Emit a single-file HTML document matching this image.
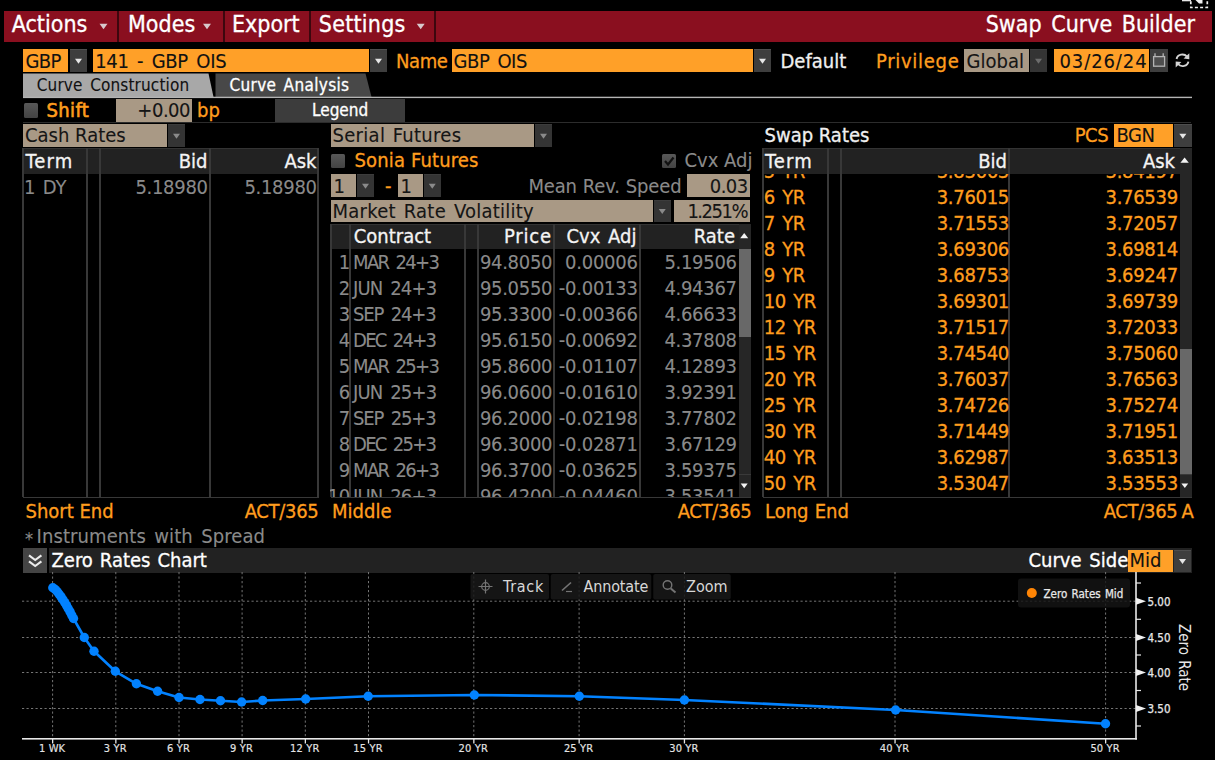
<!DOCTYPE html>
<html lang="en"><head><meta charset="utf-8"><title>Swap Curve Builder</title>
<style>
html,body{margin:0;padding:0;background:#000;}
body{width:1215px;height:760px;position:relative;overflow:hidden;font-family:"DejaVu Sans Condensed","DejaVu Sans","Liberation Sans",sans-serif;font-stretch:condensed;}
body div,body svg{position:absolute;}
.t{white-space:nowrap;-webkit-text-stroke:0.3px;}
.g{-webkit-text-stroke:0.1px;}
</style></head><body>
<div style="left:3.5px;top:10.5px;width:1208px;height:31px;background:#8a0f1f;"></div>
<div style="left:116.9px;top:10.5px;width:2px;height:31px;background:#3c070e;"></div>
<div style="left:222.6px;top:10.5px;width:2px;height:31px;background:#3c070e;"></div>
<div style="left:308.8px;top:10.5px;width:2px;height:31px;background:#3c070e;"></div>
<div style="left:434.2px;top:10.5px;width:2px;height:31px;background:#3c070e;"></div>
<div class="t " style="top:13.34px;font-size:23px;line-height:23px;color:#fff;left:11.75px;">Actions</div>
<svg style="left:0;top:0" width="1215" height="760"><polygon points="99.5,23.75 107.5,23.75 103.5,29.25" fill="#d8c8cc"/></svg>
<div class="t " style="top:13.34px;font-size:23px;line-height:23px;color:#fff;left:128px;">Modes</div>
<svg style="left:0;top:0" width="1215" height="760"><polygon points="203.0,23.75 211.0,23.75 207,29.25" fill="#d8c8cc"/></svg>
<div class="t " style="top:13.34px;font-size:23px;line-height:23px;color:#fff;left:232px;">Export</div>
<div class="t " style="top:13.34px;font-size:23px;line-height:23px;color:#fff;left:318.75px;letter-spacing:0.25px;">Settings</div>
<svg style="left:0;top:0" width="1215" height="760"><polygon points="416.7,23.75 424.7,23.75 420.7,29.25" fill="#d8c8cc"/></svg>
<div class="t " style="top:13.34px;font-size:23px;line-height:23px;color:#fff;right:20px;word-spacing:3px;">Swap Curve Builder</div>
<svg style="left:1180px;top:0" width="30" height="10"><rect x="2" y="0" width="9" height="1.300" fill="#e8e8e8"/><rect x="10.800" y="-3" width="16.500" height="10.500" fill="none" stroke="#f0f0f0" stroke-width="1.700" stroke-dasharray="3 2.200"/><polygon points="15.500,0 22.500,0 22.500,3.500 19,3.500" fill="#f0f0f0"/></svg>
<div style="left:23px;top:49px;width:45px;height:23px;background:#ffa028;"></div>
<div class="t  g" style="top:51.18px;font-size:20px;line-height:20px;color:#111;left:25.5px;letter-spacing:-0.7px;">GBP</div>
<div style="left:70px;top:49px;width:17px;height:23px;background:#3e3e3e;box-shadow:inset 0 1px 0 #4e4e4e;"></div>
<svg style="left:0;top:0" width="1215" height="760"><polygon points="75.0,58.7 82.0,58.7 78.5,63.7" fill="#e6e6e6"/></svg>
<div style="left:93px;top:49px;width:276px;height:23px;background:#ffa028;"></div>
<div class="t  g" style="top:51.18px;font-size:20px;line-height:20px;color:#111;left:95.2px;letter-spacing:-0.3px;word-spacing:3px;">141 - GBP OIS</div>
<div style="left:370px;top:49px;width:17px;height:23px;background:#3e3e3e;box-shadow:inset 0 1px 0 #4e4e4e;"></div>
<svg style="left:0;top:0" width="1215" height="760"><polygon points="375.0,58.7 382.0,58.7 378.5,63.7" fill="#e6e6e6"/></svg>
<div class="t " style="top:51.18px;font-size:20px;line-height:20px;color:#ff9d1e;left:396px;letter-spacing:-0.4px;">Name</div>
<div style="left:452px;top:49px;width:301px;height:23px;background:#ffa028;"></div>
<div class="t  g" style="top:51.18px;font-size:20px;line-height:20px;color:#111;left:453.6px;letter-spacing:-0.5px;word-spacing:3px;">GBP OIS</div>
<div style="left:754px;top:49px;width:17px;height:23px;background:#3e3e3e;box-shadow:inset 0 1px 0 #4e4e4e;"></div>
<svg style="left:0;top:0" width="1215" height="760"><polygon points="759.0,58.7 766.0,58.7 762.5,63.7" fill="#e6e6e6"/></svg>
<div class="t " style="top:51.18px;font-size:20px;line-height:20px;color:#f0f0f0;left:780.5px;">Default</div>
<div class="t " style="top:51.18px;font-size:20px;line-height:20px;color:#ff9d1e;left:876px;letter-spacing:0.7px;">Privilege</div>
<div style="left:963.5px;top:49px;width:65px;height:23px;background:#a99985;"></div>
<div class="t  g" style="top:51.18px;font-size:20px;line-height:20px;color:#151515;left:966.5px;">Global</div>
<div style="left:1030px;top:49px;width:17px;height:23px;background:#343434;box-shadow:inset 0 1px 0 #3c3c3c;"></div>
<svg style="left:0;top:0" width="1215" height="760"><polygon points="1035.0,58.7 1042.0,58.7 1038.5,63.7" fill="#6c6c6c"/></svg>
<div style="left:1053.5px;top:49px;width:95px;height:23px;background:#ffa028;"></div>
<div class="t  g" style="top:51.18px;font-size:20px;line-height:20px;color:#111;left:1059.5px;letter-spacing:0.9px;">03/26/24</div>
<div style="left:1150px;top:49px;width:18px;height:23px;background:#3e3e3e;"></div>
<svg style="left:1150px;top:49px" width="18" height="23"><rect x="3.600" y="7.600" width="11" height="9.600" fill="#4e4e4e" stroke="#b4b4b4" stroke-width="1.300"/><path d="M5 4.200V7.500 M13.200 4.200V7.500" stroke="#b4b4b4" stroke-width="1.300"/></svg>
<svg style="left:1173.500px;top:51.500px" width="17" height="17" viewBox="0 0 17 17"><path d="M2.600 7A5.800 5.200 0 0 1 13 4.600" fill="none" stroke="#d4d4d4" stroke-width="1.900"/><path d="M14.400 9.600A5.800 5.200 0 0 1 4 12" fill="none" stroke="#d4d4d4" stroke-width="1.900"/><polygon points="15.300,1.200 15.300,7.200 9.600,6.600" fill="#d4d4d4"/><polygon points="1.700,15.400 1.700,9.400 7.400,10" fill="#d4d4d4"/></svg>
<svg style="left:0;top:0" width="1215" height="760"><polygon points="23,73.500 208.500,73.500 213.500,97 23,97" fill="#a8a8a8"/><polygon points="215.500,73.500 365.500,73.500 371.500,97 215.500,97" fill="#484848"/><rect x="23" y="96.700" width="1169" height="1.400" fill="#b4b4b4"/></svg>
<div class="t  g" style="top:76.92px;font-size:17px;line-height:17px;color:#111;left:36.75px;letter-spacing:0.15px;word-spacing:2.5px;">Curve Construction</div>
<div class="t " style="top:76.92px;font-size:17px;line-height:17px;color:#fff;left:229.5px;letter-spacing:0.35px;word-spacing:2px;">Curve Analysis</div>
<div style="left:23.5px;top:103px;width:14px;height:14.5px;background:#4a4a4a;border-radius:1.5px;background:linear-gradient(#585858,#434343);"></div>
<div class="t " style="top:100.28px;font-size:20px;line-height:20px;color:#ff9d1e;left:46.5px;letter-spacing:0.35px;-webkit-text-stroke:0.6px;">Shift</div>
<div style="left:115.5px;top:98.8px;width:76.5px;height:23px;background:#a99985;"></div>
<div class="t  g" style="top:100.28px;font-size:20px;line-height:20px;color:#151515;right:1025px;letter-spacing:-0.5px;">+0.00</div>
<div class="t " style="top:100.28px;font-size:20px;line-height:20px;color:#ff9d1e;left:197px;">bp</div>
<div style="left:275px;top:99px;width:130px;height:22.8px;background:#3c3c3c;"></div>
<div class="t " style="top:102.12px;font-size:17px;line-height:17px;color:#fff;left:312px;">Legend</div>
<div style="left:23px;top:122px;width:1168px;height:1px;background:#2c2c2c;"></div>
<div style="left:23px;top:124px;width:144px;height:23px;background:#a99985;"></div>
<div class="t  g" style="top:125.08px;font-size:20px;line-height:20px;color:#151515;left:25px;">Cash Rates</div>
<div style="left:168px;top:124px;width:17px;height:23px;background:#343434;box-shadow:inset 0 1px 0 #3c3c3c;"></div>
<svg style="left:0;top:0" width="1215" height="760"><polygon points="173.0,133.7 180.0,133.7 176.5,138.7" fill="#8a8a8a"/></svg>
<div style="left:330.5px;top:124px;width:203.5px;height:23px;background:#a99985;"></div>
<div class="t  g" style="top:125.08px;font-size:20px;line-height:20px;color:#151515;left:332.5px;letter-spacing:0.3px;word-spacing:1.5px;">Serial Futures</div>
<div style="left:535px;top:124px;width:17px;height:23px;background:#343434;box-shadow:inset 0 1px 0 #3c3c3c;"></div>
<svg style="left:0;top:0" width="1215" height="760"><polygon points="540.0,133.7 547.0,133.7 543.5,138.7" fill="#8a8a8a"/></svg>
<div class="t " style="top:125.08px;font-size:20px;line-height:20px;color:#f0f0f0;left:764.5px;">Swap Rates</div>
<div class="t " style="top:125.08px;font-size:20px;line-height:20px;color:#ff9d1e;left:1074.75px;letter-spacing:-0.5px;">PCS</div>
<div style="left:1113.5px;top:124px;width:59.5px;height:23px;background:#ffa028;"></div>
<div class="t  g" style="top:125.08px;font-size:20px;line-height:20px;color:#111;left:1116.5px;letter-spacing:-0.5px;">BGN</div>
<div style="left:1174px;top:124px;width:17.7px;height:23px;background:#3e3e3e;box-shadow:inset 0 1px 0 #4e4e4e;"></div>
<svg style="left:0;top:0" width="1215" height="760"><polygon points="1179.35,133.7 1186.35,133.7 1182.85,138.7" fill="#e6e6e6"/></svg>
<div style="left:23px;top:148px;width:295.5px;height:26.2px;background:#222222;"></div>
<div style="left:23px;top:148px;width:295.5px;height:1px;background:#333;"></div>
<div style="left:22.1px;top:148px;width:2px;height:349px;background:#383838;"></div>
<div style="left:85.9px;top:148px;width:2px;height:349px;background:#383838;"></div>
<div style="left:99.25px;top:148px;width:2px;height:349px;background:#383838;"></div>
<div style="left:208.5px;top:148px;width:2px;height:349px;background:#383838;"></div>
<div style="left:317px;top:148px;width:2px;height:349px;background:#383838;"></div>
<div style="left:23px;top:496.5px;width:296px;height:1px;background:#383838;"></div>
<div class="t " style="top:150.68px;font-size:20px;line-height:20px;color:#f4f4f4;left:25.5px;letter-spacing:1.2px;">Term</div>
<div class="t " style="top:150.68px;font-size:20px;line-height:20px;color:#f4f4f4;right:1007.5px;">Bid</div>
<div class="t " style="top:150.68px;font-size:20px;line-height:20px;color:#f4f4f4;right:898.5px;">Ask</div>
<div class="t  g" style="top:176.88px;font-size:20px;line-height:20px;color:#8a8a8a;left:24px;word-spacing:1.5px;">1 DY</div>
<div class="t  g" style="top:176.88px;font-size:20px;line-height:20px;color:#8a8a8a;right:1007.3px;letter-spacing:-0.3px;">5.18980</div>
<div class="t  g" style="top:176.88px;font-size:20px;line-height:20px;color:#8a8a8a;right:898.3px;letter-spacing:-0.3px;">5.18980</div>
<div style="left:331px;top:153.5px;width:14px;height:14.5px;background:#4a4a4a;border-radius:1.5px;background:linear-gradient(#585858,#434343);"></div>
<div class="t " style="top:150.08px;font-size:20px;line-height:20px;color:#ff9d1e;left:354.5px;letter-spacing:0.15px;word-spacing:0px;">Sonia Futures</div>
<div style="left:662px;top:153.5px;width:14px;height:14.5px;background:#4a4a4a;border-radius:1.5px;background:linear-gradient(#585858,#434343);"></div>
<svg style="left:662px;top:154px" width="14" height="14"><path d="M3 7L6 10.500L11.500 3.500" fill="none" stroke="#111" stroke-width="2.2"/></svg>
<div class="t  g" style="top:150.08px;font-size:20px;line-height:20px;color:#8a8a8a;left:684.5px;word-spacing:0px;">Cvx Adj</div>
<div style="left:330.5px;top:174px;width:25px;height:23px;background:#a99985;"></div>
<div class="t  g" style="top:176.28px;font-size:20px;line-height:20px;color:#151515;left:333.5px;">1</div>
<div style="left:357px;top:174px;width:17px;height:23px;background:#343434;box-shadow:inset 0 1px 0 #3c3c3c;"></div>
<svg style="left:0;top:0" width="1215" height="760"><polygon points="362.0,183.7 369.0,183.7 365.5,188.7" fill="#8a8a8a"/></svg>
<div class="t " style="top:176.28px;font-size:20px;line-height:20px;color:#ff9d1e;left:385px;">-</div>
<div style="left:397.5px;top:174px;width:25px;height:23px;background:#a99985;"></div>
<div class="t  g" style="top:176.28px;font-size:20px;line-height:20px;color:#151515;left:400.5px;">1</div>
<div style="left:424px;top:174px;width:16.5px;height:23px;background:#343434;box-shadow:inset 0 1px 0 #3c3c3c;"></div>
<svg style="left:0;top:0" width="1215" height="760"><polygon points="428.75,183.7 435.75,183.7 432.25,188.7" fill="#8a8a8a"/></svg>
<div class="t  g" style="top:176.28px;font-size:20px;line-height:20px;color:#8a8a8a;right:533.5px;letter-spacing:-0.15px;word-spacing:0.5px;">Mean Rev. Speed</div>
<div style="left:687px;top:174px;width:63.25px;height:23px;background:#a99985;"></div>
<div class="t  g" style="top:176.28px;font-size:20px;line-height:20px;color:#151515;right:467.5px;letter-spacing:-0.6px;">0.03</div>
<div style="left:330.5px;top:199.5px;width:322px;height:22.5px;background:#a99985;"></div>
<div class="t  g" style="top:200.78px;font-size:20px;line-height:20px;color:#151515;left:332.5px;letter-spacing:0.25px;word-spacing:2px;">Market Rate Volatility</div>
<div style="left:653.5px;top:199.5px;width:17.5px;height:22.5px;background:#343434;box-shadow:inset 0 1px 0 #3c3c3c;"></div>
<svg style="left:0;top:0" width="1215" height="760"><polygon points="658.75,208.95 665.75,208.95 662.25,213.95" fill="#8a8a8a"/></svg>
<div style="left:673.75px;top:199.5px;width:76.5px;height:22.5px;background:#a99985;"></div>
<div class="t  g" style="top:200.78px;font-size:20px;line-height:20px;color:#151515;right:468px;letter-spacing:-1.5px;">1.251%</div>
<div style="left:330.5px;top:223.7px;width:420px;height:25.8px;background:#222222;"></div>
<div style="left:330.5px;top:223.7px;width:420px;height:1px;background:#333;"></div>
<div style="left:329.5px;top:223.7px;width:2px;height:273.3px;background:#383838;"></div>
<div style="left:349.1px;top:223.7px;width:2px;height:273.3px;background:#383838;"></div>
<div style="left:463.5px;top:223.7px;width:2px;height:273.3px;background:#383838;"></div>
<div style="left:476.5px;top:223.7px;width:2px;height:273.3px;background:#383838;"></div>
<div style="left:553.1px;top:223.7px;width:2px;height:273.3px;background:#383838;"></div>
<div style="left:638.5px;top:223.7px;width:2px;height:273.3px;background:#383838;"></div>
<div style="left:330.5px;top:496.5px;width:420px;height:1px;background:#383838;"></div>
<div class="t " style="top:226.28px;font-size:20px;line-height:20px;color:#f4f4f4;left:353.75px;">Contract</div>
<div class="t " style="top:226.28px;font-size:20px;line-height:20px;color:#f4f4f4;right:663.2px;letter-spacing:0.8px;">Price</div>
<div class="t " style="top:226.28px;font-size:20px;line-height:20px;color:#f4f4f4;right:578.5px;word-spacing:2px;">Cvx Adj</div>
<div class="t " style="top:226.28px;font-size:20px;line-height:20px;color:#f4f4f4;right:480px;">Rate</div>
<div style="left:330px;top:250px;width:409px;height:246.5px;overflow:hidden">
<div class="t g" style="top:1.88px;font-size:20px;line-height:20px;color:#8a8a8a;right:389.5px;letter-spacing:-0.6px;">1</div>
<div class="t g" style="top:1.88px;font-size:20px;line-height:20px;color:#8a8a8a;left:23px;word-spacing:3px;letter-spacing:-1.65px;">MAR 24+3</div>
<div class="t g" style="top:1.88px;font-size:20px;line-height:20px;color:#8a8a8a;right:186.79999999999995px;letter-spacing:-0.3px;">94.8050</div>
<div class="t g" style="top:1.88px;font-size:20px;line-height:20px;color:#8a8a8a;right:101.29999999999995px;letter-spacing:-0.25px;">0.00006</div>
<div class="t g" style="top:1.88px;font-size:20px;line-height:20px;color:#8a8a8a;right:2.2999999999999545px;letter-spacing:-0.3px;">5.19506</div>
<div class="t g" style="top:27.88px;font-size:20px;line-height:20px;color:#8a8a8a;right:389.5px;letter-spacing:-0.6px;">2</div>
<div class="t g" style="top:27.88px;font-size:20px;line-height:20px;color:#8a8a8a;left:23px;word-spacing:3px;letter-spacing:-0.85px;">JUN 24+3</div>
<div class="t g" style="top:27.88px;font-size:20px;line-height:20px;color:#8a8a8a;right:186.79999999999995px;letter-spacing:-0.3px;">95.0550</div>
<div class="t g" style="top:27.88px;font-size:20px;line-height:20px;color:#8a8a8a;right:101.29999999999995px;letter-spacing:-0.25px;">-0.00133</div>
<div class="t g" style="top:27.88px;font-size:20px;line-height:20px;color:#8a8a8a;right:2.2999999999999545px;letter-spacing:-0.3px;">4.94367</div>
<div class="t g" style="top:53.88px;font-size:20px;line-height:20px;color:#8a8a8a;right:389.5px;letter-spacing:-0.6px;">3</div>
<div class="t g" style="top:53.88px;font-size:20px;line-height:20px;color:#8a8a8a;left:23px;word-spacing:3px;letter-spacing:-1.15px;">SEP 24+3</div>
<div class="t g" style="top:53.88px;font-size:20px;line-height:20px;color:#8a8a8a;right:186.79999999999995px;letter-spacing:-0.3px;">95.3300</div>
<div class="t g" style="top:53.88px;font-size:20px;line-height:20px;color:#8a8a8a;right:101.29999999999995px;letter-spacing:-0.25px;">-0.00366</div>
<div class="t g" style="top:53.88px;font-size:20px;line-height:20px;color:#8a8a8a;right:2.2999999999999545px;letter-spacing:-0.3px;">4.66633</div>
<div class="t g" style="top:79.88px;font-size:20px;line-height:20px;color:#8a8a8a;right:389.5px;letter-spacing:-0.6px;">4</div>
<div class="t g" style="top:79.88px;font-size:20px;line-height:20px;color:#8a8a8a;left:23px;word-spacing:3px;letter-spacing:-1.7px;">DEC 24+3</div>
<div class="t g" style="top:79.88px;font-size:20px;line-height:20px;color:#8a8a8a;right:186.79999999999995px;letter-spacing:-0.3px;">95.6150</div>
<div class="t g" style="top:79.88px;font-size:20px;line-height:20px;color:#8a8a8a;right:101.29999999999995px;letter-spacing:-0.25px;">-0.00692</div>
<div class="t g" style="top:79.88px;font-size:20px;line-height:20px;color:#8a8a8a;right:2.2999999999999545px;letter-spacing:-0.3px;">4.37808</div>
<div class="t g" style="top:105.88px;font-size:20px;line-height:20px;color:#8a8a8a;right:389.5px;letter-spacing:-0.6px;">5</div>
<div class="t g" style="top:105.88px;font-size:20px;line-height:20px;color:#8a8a8a;left:23px;word-spacing:3px;letter-spacing:-1.65px;">MAR 25+3</div>
<div class="t g" style="top:105.88px;font-size:20px;line-height:20px;color:#8a8a8a;right:186.79999999999995px;letter-spacing:-0.3px;">95.8600</div>
<div class="t g" style="top:105.88px;font-size:20px;line-height:20px;color:#8a8a8a;right:101.29999999999995px;letter-spacing:-0.25px;">-0.01107</div>
<div class="t g" style="top:105.88px;font-size:20px;line-height:20px;color:#8a8a8a;right:2.2999999999999545px;letter-spacing:-0.3px;">4.12893</div>
<div class="t g" style="top:131.88px;font-size:20px;line-height:20px;color:#8a8a8a;right:389.5px;letter-spacing:-0.6px;">6</div>
<div class="t g" style="top:131.88px;font-size:20px;line-height:20px;color:#8a8a8a;left:23px;word-spacing:3px;letter-spacing:-0.85px;">JUN 25+3</div>
<div class="t g" style="top:131.88px;font-size:20px;line-height:20px;color:#8a8a8a;right:186.79999999999995px;letter-spacing:-0.3px;">96.0600</div>
<div class="t g" style="top:131.88px;font-size:20px;line-height:20px;color:#8a8a8a;right:101.29999999999995px;letter-spacing:-0.25px;">-0.01610</div>
<div class="t g" style="top:131.88px;font-size:20px;line-height:20px;color:#8a8a8a;right:2.2999999999999545px;letter-spacing:-0.3px;">3.92391</div>
<div class="t g" style="top:157.88px;font-size:20px;line-height:20px;color:#8a8a8a;right:389.5px;letter-spacing:-0.6px;">7</div>
<div class="t g" style="top:157.88px;font-size:20px;line-height:20px;color:#8a8a8a;left:23px;word-spacing:3px;letter-spacing:-1.15px;">SEP 25+3</div>
<div class="t g" style="top:157.88px;font-size:20px;line-height:20px;color:#8a8a8a;right:186.79999999999995px;letter-spacing:-0.3px;">96.2000</div>
<div class="t g" style="top:157.88px;font-size:20px;line-height:20px;color:#8a8a8a;right:101.29999999999995px;letter-spacing:-0.25px;">-0.02198</div>
<div class="t g" style="top:157.88px;font-size:20px;line-height:20px;color:#8a8a8a;right:2.2999999999999545px;letter-spacing:-0.3px;">3.77802</div>
<div class="t g" style="top:183.88px;font-size:20px;line-height:20px;color:#8a8a8a;right:389.5px;letter-spacing:-0.6px;">8</div>
<div class="t g" style="top:183.88px;font-size:20px;line-height:20px;color:#8a8a8a;left:23px;word-spacing:3px;letter-spacing:-1.7px;">DEC 25+3</div>
<div class="t g" style="top:183.88px;font-size:20px;line-height:20px;color:#8a8a8a;right:186.79999999999995px;letter-spacing:-0.3px;">96.3000</div>
<div class="t g" style="top:183.88px;font-size:20px;line-height:20px;color:#8a8a8a;right:101.29999999999995px;letter-spacing:-0.25px;">-0.02871</div>
<div class="t g" style="top:183.88px;font-size:20px;line-height:20px;color:#8a8a8a;right:2.2999999999999545px;letter-spacing:-0.3px;">3.67129</div>
<div class="t g" style="top:209.88px;font-size:20px;line-height:20px;color:#8a8a8a;right:389.5px;letter-spacing:-0.6px;">9</div>
<div class="t g" style="top:209.88px;font-size:20px;line-height:20px;color:#8a8a8a;left:23px;word-spacing:3px;letter-spacing:-1.65px;">MAR 26+3</div>
<div class="t g" style="top:209.88px;font-size:20px;line-height:20px;color:#8a8a8a;right:186.79999999999995px;letter-spacing:-0.3px;">96.3700</div>
<div class="t g" style="top:209.88px;font-size:20px;line-height:20px;color:#8a8a8a;right:101.29999999999995px;letter-spacing:-0.25px;">-0.03625</div>
<div class="t g" style="top:209.88px;font-size:20px;line-height:20px;color:#8a8a8a;right:2.2999999999999545px;letter-spacing:-0.3px;">3.59375</div>
<div class="t g" style="top:235.88px;font-size:20px;line-height:20px;color:#8a8a8a;right:389.5px;letter-spacing:-0.6px;">10</div>
<div class="t g" style="top:235.88px;font-size:20px;line-height:20px;color:#8a8a8a;left:23px;word-spacing:3px;letter-spacing:-0.85px;">JUN 26+3</div>
<div class="t g" style="top:235.88px;font-size:20px;line-height:20px;color:#8a8a8a;right:186.79999999999995px;letter-spacing:-0.3px;">96.4200</div>
<div class="t g" style="top:235.88px;font-size:20px;line-height:20px;color:#8a8a8a;right:101.29999999999995px;letter-spacing:-0.25px;">-0.04460</div>
<div class="t g" style="top:235.88px;font-size:20px;line-height:20px;color:#8a8a8a;right:2.2999999999999545px;letter-spacing:-0.3px;">3.53541</div>
</div>
<div style="left:738.8px;top:223.7px;width:12.4px;height:273.3px;background:#262626;"></div>
<div style="left:738.8px;top:248.5px;width:12.4px;height:88.5px;background:#686868;"></div>
<div style="left:738.8px;top:474px;width:12.4px;height:1px;background:#3a3a3a;"></div>
<svg style="left:0;top:0" width="1215" height="760"><polygon points="740.2,238.25 748.2,238.25 744.2,232.95" fill="#f4f4f4"/></svg>
<svg style="left:0;top:0" width="1215" height="760"><polygon points="740.7,483.40000000000003 747.7,483.40000000000003 744.2,488.20000000000005" fill="#f4f4f4"/></svg>
<div style="left:763px;top:148px;width:428.5px;height:26.2px;background:#222222;"></div>
<div style="left:763px;top:148px;width:428.5px;height:1px;background:#333;"></div>
<div style="left:761.9px;top:148px;width:2px;height:349px;background:#383838;"></div>
<div style="left:826.5px;top:148px;width:2px;height:349px;background:#383838;"></div>
<div style="left:839.7px;top:148px;width:2px;height:349px;background:#383838;"></div>
<div style="left:1008px;top:148px;width:2px;height:349px;background:#383838;"></div>
<div style="left:763px;top:496.5px;width:429px;height:1px;background:#383838;"></div>
<div class="t " style="top:150.68px;font-size:20px;line-height:20px;color:#f4f4f4;left:765px;letter-spacing:1.2px;">Term</div>
<div class="t " style="top:150.68px;font-size:20px;line-height:20px;color:#f4f4f4;right:208px;">Bid</div>
<div class="t " style="top:150.68px;font-size:20px;line-height:20px;color:#f4f4f4;right:40px;">Ask</div>
<div style="left:763px;top:174.300px;width:417px;height:322.2px;overflow:hidden">
<div class="t" style="top:-13.42px;font-size:20px;line-height:20px;color:#ff9d1e;left:0.800px;word-spacing:2px;letter-spacing:-0.4px">5 YR</div>
<div class="t" style="top:-13.42px;font-size:20px;line-height:20px;color:#ff9d1e;right:171px;letter-spacing:-0.3px">3.83663</div>
<div class="t" style="top:-13.42px;font-size:20px;line-height:20px;color:#ff9d1e;right:2.2000000000000455px;letter-spacing:-0.3px">3.84197</div>
<div class="t" style="top:12.58px;font-size:20px;line-height:20px;color:#ff9d1e;left:0.800px;word-spacing:2px;letter-spacing:-0.4px">6 YR</div>
<div class="t" style="top:12.58px;font-size:20px;line-height:20px;color:#ff9d1e;right:171px;letter-spacing:-0.3px">3.76015</div>
<div class="t" style="top:12.58px;font-size:20px;line-height:20px;color:#ff9d1e;right:2.2000000000000455px;letter-spacing:-0.3px">3.76539</div>
<div class="t" style="top:38.58px;font-size:20px;line-height:20px;color:#ff9d1e;left:0.800px;word-spacing:2px;letter-spacing:-0.4px">7 YR</div>
<div class="t" style="top:38.58px;font-size:20px;line-height:20px;color:#ff9d1e;right:171px;letter-spacing:-0.3px">3.71553</div>
<div class="t" style="top:38.58px;font-size:20px;line-height:20px;color:#ff9d1e;right:2.2000000000000455px;letter-spacing:-0.3px">3.72057</div>
<div class="t" style="top:64.58px;font-size:20px;line-height:20px;color:#ff9d1e;left:0.800px;word-spacing:2px;letter-spacing:-0.4px">8 YR</div>
<div class="t" style="top:64.58px;font-size:20px;line-height:20px;color:#ff9d1e;right:171px;letter-spacing:-0.3px">3.69306</div>
<div class="t" style="top:64.58px;font-size:20px;line-height:20px;color:#ff9d1e;right:2.2000000000000455px;letter-spacing:-0.3px">3.69814</div>
<div class="t" style="top:90.58px;font-size:20px;line-height:20px;color:#ff9d1e;left:0.800px;word-spacing:2px;letter-spacing:-0.4px">9 YR</div>
<div class="t" style="top:90.58px;font-size:20px;line-height:20px;color:#ff9d1e;right:171px;letter-spacing:-0.3px">3.68753</div>
<div class="t" style="top:90.58px;font-size:20px;line-height:20px;color:#ff9d1e;right:2.2000000000000455px;letter-spacing:-0.3px">3.69247</div>
<div class="t" style="top:116.58px;font-size:20px;line-height:20px;color:#ff9d1e;left:0.800px;word-spacing:2px;letter-spacing:-0.4px">10 YR</div>
<div class="t" style="top:116.58px;font-size:20px;line-height:20px;color:#ff9d1e;right:171px;letter-spacing:-0.3px">3.69301</div>
<div class="t" style="top:116.58px;font-size:20px;line-height:20px;color:#ff9d1e;right:2.2000000000000455px;letter-spacing:-0.3px">3.69739</div>
<div class="t" style="top:142.58px;font-size:20px;line-height:20px;color:#ff9d1e;left:0.800px;word-spacing:2px;letter-spacing:-0.4px">12 YR</div>
<div class="t" style="top:142.58px;font-size:20px;line-height:20px;color:#ff9d1e;right:171px;letter-spacing:-0.3px">3.71517</div>
<div class="t" style="top:142.58px;font-size:20px;line-height:20px;color:#ff9d1e;right:2.2000000000000455px;letter-spacing:-0.3px">3.72033</div>
<div class="t" style="top:168.58px;font-size:20px;line-height:20px;color:#ff9d1e;left:0.800px;word-spacing:2px;letter-spacing:-0.4px">15 YR</div>
<div class="t" style="top:168.58px;font-size:20px;line-height:20px;color:#ff9d1e;right:171px;letter-spacing:-0.3px">3.74540</div>
<div class="t" style="top:168.58px;font-size:20px;line-height:20px;color:#ff9d1e;right:2.2000000000000455px;letter-spacing:-0.3px">3.75060</div>
<div class="t" style="top:194.58px;font-size:20px;line-height:20px;color:#ff9d1e;left:0.800px;word-spacing:2px;letter-spacing:-0.4px">20 YR</div>
<div class="t" style="top:194.58px;font-size:20px;line-height:20px;color:#ff9d1e;right:171px;letter-spacing:-0.3px">3.76037</div>
<div class="t" style="top:194.58px;font-size:20px;line-height:20px;color:#ff9d1e;right:2.2000000000000455px;letter-spacing:-0.3px">3.76563</div>
<div class="t" style="top:220.58px;font-size:20px;line-height:20px;color:#ff9d1e;left:0.800px;word-spacing:2px;letter-spacing:-0.4px">25 YR</div>
<div class="t" style="top:220.58px;font-size:20px;line-height:20px;color:#ff9d1e;right:171px;letter-spacing:-0.3px">3.74726</div>
<div class="t" style="top:220.58px;font-size:20px;line-height:20px;color:#ff9d1e;right:2.2000000000000455px;letter-spacing:-0.3px">3.75274</div>
<div class="t" style="top:246.58px;font-size:20px;line-height:20px;color:#ff9d1e;left:0.800px;word-spacing:2px;letter-spacing:-0.4px">30 YR</div>
<div class="t" style="top:246.58px;font-size:20px;line-height:20px;color:#ff9d1e;right:171px;letter-spacing:-0.3px">3.71449</div>
<div class="t" style="top:246.58px;font-size:20px;line-height:20px;color:#ff9d1e;right:2.2000000000000455px;letter-spacing:-0.3px">3.71951</div>
<div class="t" style="top:272.58px;font-size:20px;line-height:20px;color:#ff9d1e;left:0.800px;word-spacing:2px;letter-spacing:-0.4px">40 YR</div>
<div class="t" style="top:272.58px;font-size:20px;line-height:20px;color:#ff9d1e;right:171px;letter-spacing:-0.3px">3.62987</div>
<div class="t" style="top:272.58px;font-size:20px;line-height:20px;color:#ff9d1e;right:2.2000000000000455px;letter-spacing:-0.3px">3.63513</div>
<div class="t" style="top:298.58px;font-size:20px;line-height:20px;color:#ff9d1e;left:0.800px;word-spacing:2px;letter-spacing:-0.4px">50 YR</div>
<div class="t" style="top:298.58px;font-size:20px;line-height:20px;color:#ff9d1e;right:171px;letter-spacing:-0.3px">3.53047</div>
<div class="t" style="top:298.58px;font-size:20px;line-height:20px;color:#ff9d1e;right:2.2000000000000455px;letter-spacing:-0.3px">3.53553</div>
</div>
<div style="left:1179.8px;top:148px;width:12.4px;height:349px;background:#262626;"></div>
<div style="left:1179.8px;top:348.5px;width:12.4px;height:125px;background:#686868;"></div>
<div style="left:1179.8px;top:474px;width:12.4px;height:1px;background:#3a3a3a;"></div>
<svg style="left:0;top:0" width="1215" height="760"><polygon points="1180.3999999999999,162.85 1188.8,162.85 1184.6,157.54999999999998" fill="#f4f4f4"/></svg>
<svg style="left:0;top:0" width="1215" height="760"><polygon points="1181.3999999999999,483.5 1188.1999999999998,483.5 1184.8,488.1" fill="#f4f4f4"/></svg>
<div class="t " style="top:500.58px;font-size:20px;line-height:20px;color:#ff9d1e;left:25.5px;word-spacing:0px;">Short End</div>
<div class="t " style="top:500.58px;font-size:20px;line-height:20px;color:#ff9d1e;right:896.5px;letter-spacing:-0.3px;">ACT/365</div>
<div class="t " style="top:500.58px;font-size:20px;line-height:20px;color:#ff9d1e;left:332px;">Middle</div>
<div class="t " style="top:500.58px;font-size:20px;line-height:20px;color:#ff9d1e;right:463.5px;letter-spacing:-0.3px;">ACT/365</div>
<div class="t " style="top:500.58px;font-size:20px;line-height:20px;color:#ff9d1e;left:765px;word-spacing:0.5px;">Long End</div>
<div class="t " style="top:500.58px;font-size:20px;line-height:20px;color:#ff9d1e;right:37.5px;letter-spacing:-0.3px;">ACT/365</div>
<div class="t " style="top:500.58px;font-size:20px;line-height:20px;color:#ff9d1e;left:1181.5px;letter-spacing:-0.5px;">A</div>
<div class="t  g" style="top:529.97px;font-size:18px;line-height:18px;color:#8a8a8a;left:25px;">*</div>
<div class="t  g" style="top:526.08px;font-size:20px;line-height:20px;color:#8a8a8a;left:36.5px;letter-spacing:0.1px;word-spacing:2.5px;">Instruments with Spread</div>
<div style="left:23px;top:548px;width:24px;height:24.5px;background:#444;"></div>
<svg style="left:23px;top:548px" width="24" height="24"><path d="M6 7.300L12.200 12L18.400 7.300 M6 13.300L12.200 18L18.400 13.300" fill="none" stroke="#ececec" stroke-width="2.100"/></svg>
<div style="left:48.5px;top:548px;width:1143px;height:24.5px;background:#222222;"></div>
<div class="t " style="top:550.08px;font-size:20px;line-height:20px;color:#fff;left:51.5px;word-spacing:1.3px;">Zero Rates Chart</div>
<div class="t " style="top:550.08px;font-size:20px;line-height:20px;color:#fff;left:1028.5px;word-spacing:2px;">Curve Side</div>
<div style="left:1127.5px;top:549.5px;width:45px;height:22.5px;background:#ffa028;"></div>
<div class="t  g" style="top:550.08px;font-size:20px;line-height:20px;color:#111;left:1129.5px;">Mid</div>
<div style="left:1174px;top:549.5px;width:17px;height:22.5px;background:#3e3e3e;box-shadow:inset 0 1px 0 #4e4e4e;"></div>
<svg style="left:0;top:0" width="1215" height="760"><polygon points="1179.0,558.95 1186.0,558.95 1182.5,563.95" fill="#e6e6e6"/></svg>
<svg style="left:0;top:0" width="1215" height="760" font-family='&quot;DejaVu Sans Condensed&quot;,&quot;DejaVu Sans&quot;,&quot;Liberation Sans&quot;,sans-serif'>
<line x1="52.6" y1="572" x2="52.6" y2="738" stroke="#747474" stroke-width="1" stroke-dasharray="2.2 2.300"/>
<line x1="115.8" y1="572" x2="115.8" y2="738" stroke="#747474" stroke-width="1" stroke-dasharray="2.2 2.300"/>
<line x1="179.0" y1="572" x2="179.0" y2="738" stroke="#747474" stroke-width="1" stroke-dasharray="2.2 2.300"/>
<line x1="242.1" y1="572" x2="242.1" y2="738" stroke="#747474" stroke-width="1" stroke-dasharray="2.2 2.300"/>
<line x1="305.3" y1="572" x2="305.3" y2="738" stroke="#747474" stroke-width="1" stroke-dasharray="2.2 2.300"/>
<line x1="368.5" y1="572" x2="368.5" y2="738" stroke="#747474" stroke-width="1" stroke-dasharray="2.2 2.300"/>
<line x1="473.8" y1="572" x2="473.8" y2="738" stroke="#747474" stroke-width="1" stroke-dasharray="2.2 2.300"/>
<line x1="579.1" y1="572" x2="579.1" y2="738" stroke="#747474" stroke-width="1" stroke-dasharray="2.2 2.300"/>
<line x1="684.4" y1="572" x2="684.4" y2="738" stroke="#747474" stroke-width="1" stroke-dasharray="2.2 2.300"/>
<line x1="895.0" y1="572" x2="895.0" y2="738" stroke="#747474" stroke-width="1" stroke-dasharray="2.2 2.300"/>
<line x1="1105.6" y1="572" x2="1105.6" y2="738" stroke="#747474" stroke-width="1" stroke-dasharray="2.2 2.300"/>
<line x1="22" y1="601.2" x2="1136" y2="601.2" stroke="#747474" stroke-width="1" stroke-dasharray="2.2 2.300"/>
<line x1="22" y1="637.5" x2="1136" y2="637.5" stroke="#747474" stroke-width="1" stroke-dasharray="2.2 2.300"/>
<line x1="22" y1="672.5" x2="1136" y2="672.5" stroke="#747474" stroke-width="1" stroke-dasharray="2.2 2.300"/>
<line x1="22" y1="708.5" x2="1136" y2="708.5" stroke="#747474" stroke-width="1" stroke-dasharray="2.2 2.300"/>
<rect x="470.5" y="574" width="78.5" height="25.500" rx="2" fill="#191919" fill-opacity="0.85"/>
<rect x="550.75" y="574" width="100.5" height="25.500" rx="2" fill="#191919" fill-opacity="0.85"/>
<rect x="653.25" y="574" width="77.5" height="25.500" rx="2" fill="#191919" fill-opacity="0.85"/>
<rect x="22" y="738" width="1115" height="1.600" fill="#e8e8e8"/>
<rect x="1135.2" y="572" width="1.600" height="167.600" fill="#e8e8e8"/>
<rect x="52.0" y="739" width="1.300" height="4.500" fill="#e8e8e8"/>
<rect x="115.2" y="739" width="1.300" height="4.500" fill="#e8e8e8"/>
<rect x="178.4" y="739" width="1.300" height="4.500" fill="#e8e8e8"/>
<rect x="241.5" y="739" width="1.300" height="4.500" fill="#e8e8e8"/>
<rect x="304.7" y="739" width="1.300" height="4.500" fill="#e8e8e8"/>
<rect x="367.9" y="739" width="1.300" height="4.500" fill="#e8e8e8"/>
<rect x="473.2" y="739" width="1.300" height="4.500" fill="#e8e8e8"/>
<rect x="578.5" y="739" width="1.300" height="4.500" fill="#e8e8e8"/>
<rect x="683.8" y="739" width="1.300" height="4.500" fill="#e8e8e8"/>
<rect x="894.4" y="739" width="1.300" height="4.500" fill="#e8e8e8"/>
<rect x="1105.0" y="739" width="1.300" height="4.500" fill="#e8e8e8"/>
<polygon points="1136,597.7 1146,601.2 1136,604.7" fill="#f0f0f0"/>
<polygon points="1136,634.0 1146,637.5 1136,641.0" fill="#f0f0f0"/>
<polygon points="1136,669.0 1146,672.5 1136,676.0" fill="#f0f0f0"/>
<polygon points="1136,705.0 1146,708.5 1136,712.0" fill="#f0f0f0"/>
<rect x="1136" y="582.4" width="5" height="1.200" fill="#e8e8e8"/>
<rect x="1136" y="618.6999999999999" width="5" height="1.200" fill="#e8e8e8"/>
<rect x="1136" y="654.4" width="5" height="1.200" fill="#e8e8e8"/>
<rect x="1136" y="689.9" width="5" height="1.200" fill="#e8e8e8"/>
<rect x="1136" y="725.4" width="5" height="1.200" fill="#e8e8e8"/>
<polyline points="52.8,587.8 55.2,589.5 57.3,591.8 59.2,594.3 61.1,596.9 63.0,599.7 64.8,602.6 66.6,605.6 68.3,608.7 70.1,611.9 71.8,615.2 73.5,618.5 84.3,637.5 94.0,651.3 115.3,671.3 136.4,683.8 157.6,691.3 179.0,697.5 200.0,699.5 220.5,700.8 241.6,702.0 262.7,700.5 305.7,699.0 368.2,696.2 474.3,695.0 579.3,696.2 684.4,700.0 895.6,710.0 1105.5,723.8" fill="none" stroke="#0282ff" stroke-width="2.600" stroke-linejoin="round"/>
<circle cx="52.8" cy="587.8" r="4.700" fill="#0282ff"/>
<circle cx="55.2" cy="589.5" r="4.700" fill="#0282ff"/>
<circle cx="57.3" cy="591.8" r="4.700" fill="#0282ff"/>
<circle cx="59.2" cy="594.3" r="4.700" fill="#0282ff"/>
<circle cx="61.1" cy="596.9" r="4.700" fill="#0282ff"/>
<circle cx="63.0" cy="599.7" r="4.700" fill="#0282ff"/>
<circle cx="64.8" cy="602.6" r="4.700" fill="#0282ff"/>
<circle cx="66.6" cy="605.6" r="4.700" fill="#0282ff"/>
<circle cx="68.3" cy="608.7" r="4.700" fill="#0282ff"/>
<circle cx="70.1" cy="611.9" r="4.700" fill="#0282ff"/>
<circle cx="71.8" cy="615.2" r="4.700" fill="#0282ff"/>
<circle cx="73.5" cy="618.5" r="4.700" fill="#0282ff"/>
<circle cx="84.3" cy="637.5" r="4.700" fill="#0282ff"/>
<circle cx="94.0" cy="651.3" r="4.700" fill="#0282ff"/>
<circle cx="115.3" cy="671.3" r="4.700" fill="#0282ff"/>
<circle cx="136.4" cy="683.8" r="4.700" fill="#0282ff"/>
<circle cx="157.6" cy="691.3" r="4.700" fill="#0282ff"/>
<circle cx="179.0" cy="697.5" r="4.700" fill="#0282ff"/>
<circle cx="200.0" cy="699.5" r="4.700" fill="#0282ff"/>
<circle cx="220.5" cy="700.8" r="4.700" fill="#0282ff"/>
<circle cx="241.6" cy="702.0" r="4.700" fill="#0282ff"/>
<circle cx="262.7" cy="700.5" r="4.700" fill="#0282ff"/>
<circle cx="305.7" cy="699.0" r="4.700" fill="#0282ff"/>
<circle cx="368.2" cy="696.2" r="4.700" fill="#0282ff"/>
<circle cx="474.3" cy="695.0" r="4.700" fill="#0282ff"/>
<circle cx="579.3" cy="696.2" r="4.700" fill="#0282ff"/>
<circle cx="684.4" cy="700.0" r="4.700" fill="#0282ff"/>
<circle cx="895.6" cy="710.0" r="4.700" fill="#0282ff"/>
<circle cx="1105.5" cy="723.8" r="4.700" fill="#0282ff"/>
<rect x="1018" y="578.500" width="112" height="29" rx="3" fill="#151515" fill-opacity="0.82"/>
<circle cx="1031.800" cy="593" r="5" fill="#ff8505"/>
<text x="1043.500" y="597.500" font-size="11.500" fill="#e8e8e8" stroke="#e8e8e8" stroke-width="0.25" word-spacing="1">Zero Rates Mid</text>
<g stroke="#747474" stroke-width="1.200" fill="none"><circle cx="485.500" cy="586.500" r="3.800"/><path d="M485.500 579.500V593.500 M478.500 586.500H492.500"/></g>
<text x="503" y="592" font-size="16" letter-spacing="0.7" fill="#d8d8d8">Track</text>
<g stroke="#747474" stroke-width="1.600" fill="none"><path d="M562 590.500L571 582.500"/><path d="M566 591.500H572" stroke-width="1.200"/></g>
<text x="583.500" y="592" font-size="16" letter-spacing="-0.15" fill="#d8d8d8">Annotate</text>
<g stroke="#747474" stroke-width="1.400" fill="none"><circle cx="667.500" cy="585" r="4.300"/><path d="M670.800 588.500L675.500 592.500" stroke-width="2"/></g>
<text x="686" y="592" font-size="16" letter-spacing="0.05" fill="#d8d8d8">Zoom</text>
<text x="52.1" y="751.600" font-size="11" fill="#e4e4e4" stroke="#e4e4e4" stroke-width="0.15" text-anchor="middle" letter-spacing="0.15">1 WK</text>
<text x="115.3" y="751.600" font-size="11" fill="#e4e4e4" stroke="#e4e4e4" stroke-width="0.15" text-anchor="middle" letter-spacing="0.15">3 YR</text>
<text x="178.5" y="751.600" font-size="11" fill="#e4e4e4" stroke="#e4e4e4" stroke-width="0.15" text-anchor="middle" letter-spacing="0.15">6 YR</text>
<text x="241.6" y="751.600" font-size="11" fill="#e4e4e4" stroke="#e4e4e4" stroke-width="0.15" text-anchor="middle" letter-spacing="0.15">9 YR</text>
<text x="304.8" y="751.600" font-size="11" fill="#e4e4e4" stroke="#e4e4e4" stroke-width="0.15" text-anchor="middle" letter-spacing="0.15">12 YR</text>
<text x="368.0" y="751.600" font-size="11" fill="#e4e4e4" stroke="#e4e4e4" stroke-width="0.15" text-anchor="middle" letter-spacing="0.15">15 YR</text>
<text x="473.3" y="751.600" font-size="11" fill="#e4e4e4" stroke="#e4e4e4" stroke-width="0.15" text-anchor="middle" letter-spacing="0.15">20 YR</text>
<text x="578.6" y="751.600" font-size="11" fill="#e4e4e4" stroke="#e4e4e4" stroke-width="0.15" text-anchor="middle" letter-spacing="0.15">25 YR</text>
<text x="683.9" y="751.600" font-size="11" fill="#e4e4e4" stroke="#e4e4e4" stroke-width="0.15" text-anchor="middle" letter-spacing="0.15">30 YR</text>
<text x="894.5" y="751.600" font-size="11" fill="#e4e4e4" stroke="#e4e4e4" stroke-width="0.15" text-anchor="middle" letter-spacing="0.15">40 YR</text>
<text x="1105.1" y="751.600" font-size="11" fill="#e4e4e4" stroke="#e4e4e4" stroke-width="0.15" text-anchor="middle" letter-spacing="0.15">50 YR</text>
<text x="1147.500" y="606.1" font-size="11.500" fill="#e8e8e8" stroke="#e8e8e8" stroke-width="0.25">5.00</text>
<text x="1147.500" y="642.4" font-size="11.500" fill="#e8e8e8" stroke="#e8e8e8" stroke-width="0.25">4.50</text>
<text x="1147.500" y="677.4" font-size="11.500" fill="#e8e8e8" stroke="#e8e8e8" stroke-width="0.25">4.00</text>
<text x="1147.500" y="713.4" font-size="11.500" fill="#e8e8e8" stroke="#e8e8e8" stroke-width="0.25">3.50</text>
<text transform="translate(1178.500,657.500) rotate(90)" font-size="15" fill="#e6e6e6" text-anchor="middle" word-spacing="1">Zero Rate</text>
</svg>
</body></html>
